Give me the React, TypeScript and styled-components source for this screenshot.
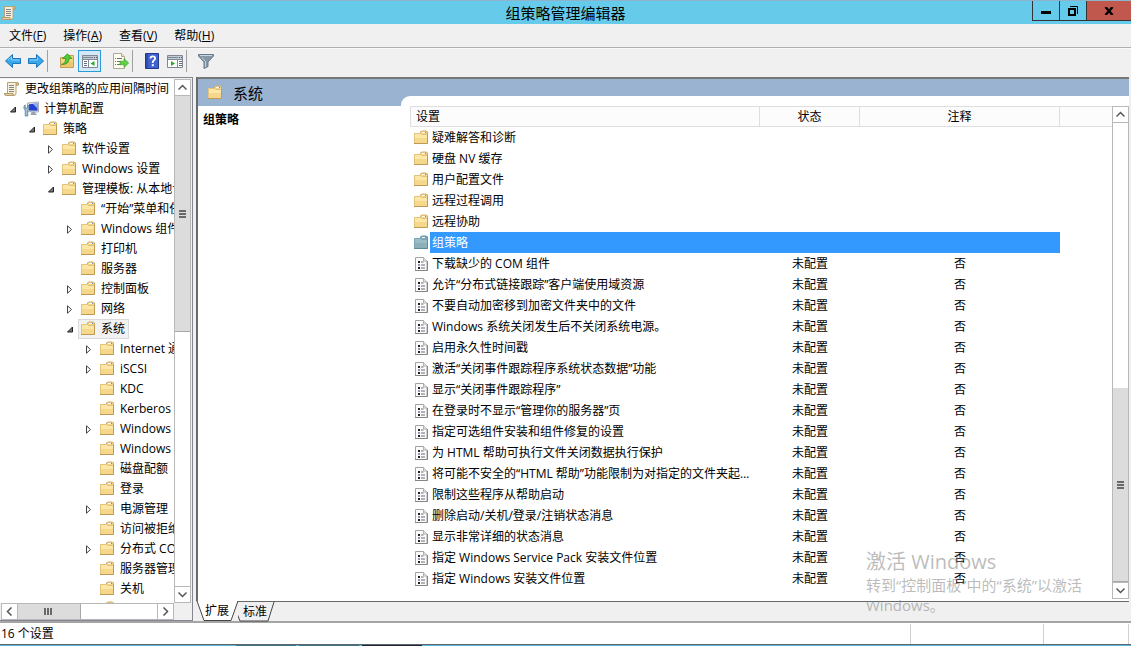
import React from 'react';
import styled, { createGlobalStyle, css } from 'styled-components';

const Global = createGlobalStyle`
  * { box-sizing: border-box; }
  body {
    margin: 0;
    font: 12px/20px "Open Sans", "Noto Sans CJK SC", sans-serif;
    color: #000;
    background: #f0f0f0;
  }
  button { font: inherit; color: inherit; padding: 0; border: 0; background: none; }
  svg { display: block; flex: none; }
`;

const Window = styled.div`
  display: flex;
  flex-direction: column;
  height: 100vh;
  overflow: hidden;
`;

const TitleBar = styled.header`
  display: flex;
  align-items: center;
  flex: none;
  height: 24px;
  padding-left: 1px;
  background: #66caea;
  border-top: 1px solid #8fb3cc;
`;

const Title = styled.h1`
  flex: 1;
  margin: 0;
  padding-left: 82px;
  font-size: 15px;
  font-weight: 400;
  line-height: 22px;
  text-align: center;
`;

const Caption = styled.div`
  display: flex;
  align-self: flex-start;
  height: 20px;
`;

const CaptionButton = styled.button<{ $close?: boolean }>`
  display: flex;
  align-items: center;
  justify-content: center;
  width: ${p => (p.$close ? 45 : 27)}px;
  border: solid #333;
  border-width: 0 0 1px 1px;
  background: ${p => (p.$close ? '#c1584d' : 'transparent')};
`;

const MenuBar = styled.nav`
  display: flex;
  flex: none;
  gap: 17px;
  height: 24px;
  padding: 1px 9px 0;
  border-bottom: 1px solid #b0b0b0;
`;

const ToolBar = styled.div`
  display: flex;
  align-items: center;
  flex: none;
  height: 29px;
  padding: 0 1px 5px;
  border-top: 1px solid #fafafa;
`;

const Tool = styled.button<{ $active?: boolean }>`
  display: flex;
  align-items: center;
  justify-content: center;
  width: 23px;
  height: 22px;
  ${p => p.$active && css`
    background: #d3e9f7;
    border: 1px solid #2a9ad8;
  `}
`;

const Separator = styled.span<{ $blank?: boolean }>`
  width: 1px;
  height: 22px;
  margin-right: 7px;
  background: ${p => (p.$blank ? 'transparent' : '#a0a0a0')};
`;

const Main = styled.main`
  display: flex;
  flex: 1;
  min-height: 0;
  gap: 3px;
`;

const TreePane = styled.aside`
  display: flex;
  flex-direction: column;
  flex: none;
  width: 193px;
  padding: 1px 1px 0 0;
  border: solid #828790;
  border-width: 1px 1px 1px 0;
`;

const TreeBody = styled.div`
  display: flex;
  flex: 1;
  min-height: 0;
`;

const Tree = styled.ul`
  flex: 1;
  min-width: 0;
  margin: 0;
  padding: 0;
  overflow: hidden;
  list-style: none;
  background: #fff;
`;

const TreeRow = styled.li<{ $level: number }>`
  display: flex;
  align-items: center;
  height: 20px;
  padding-left: ${p => (p.$level ? p.$level * 19 - 15 : 2)}px;
  white-space: nowrap;
`;

const Twist = styled.span`
  flex: none;
  width: 17px;
  padding-left: 5px;
`;

const Node = styled.span<{ $selected?: boolean }>`
  display: flex;
  align-items: center;
  gap: 5px;
  height: 20px;
  padding: 0 3px 0 1px;
  border: 1px solid ${p => (p.$selected ? '#dadada' : 'transparent')};
  background: ${p => (p.$selected ? '#f2f2f2' : 'transparent')};
`;

const VBar = styled.div`
  display: flex;
  flex-direction: column;
  flex: none;
  width: 17px;
  background: #fff;
  border: solid #b8b8b8;
  border-width: 0 1px;
`;

const HBar = styled.div`
  display: flex;
  flex: none;
  height: 17px;
  margin: 0 17px 0 1px;
  background: #fff;
  border: solid #b8b8b8;
  border-width: 1px 0;
`;

const Arrow = styled.button<{ $side?: boolean }>`
  display: flex;
  align-items: center;
  justify-content: center;
  flex: none;
  width: ${p => (p.$side ? 17 : 15)}px;
  height: ${p => (p.$side ? 15 : 17)}px;
  border: solid #b8b8b8;
  border-width: ${p => (p.$side ? '0 1px' : '1px 0')};
`;

const Track = styled.div<{ $grow: number }>`
  flex: ${p => p.$grow} 1 0;
`;

const Thumb = styled.div<{ $grow: number; $side?: boolean }>`
  display: flex;
  align-items: center;
  justify-content: center;
  flex: ${p => p.$grow} 1 0;
  background: #dcdcdc;
  border: solid #a8a8a8;
  border-width: ${p => (p.$side ? '0 1px 0 0' : '0 0 1px')};
`;

const RightPane = styled.section`
  display: flex;
  flex-direction: column;
  flex: 1;
  min-width: 0;
  margin-right: 2px;
`;

const Framed = styled.div`
  display: flex;
  flex: 1;
  min-height: 0;
  border: solid #696969;
  border-width: 2px 0 0 2px;
  border-top-color: #777;
  background: #9ab3d0;
`;

const Summary = styled.div`
  display: flex;
  flex-direction: column;
  flex: none;
  width: 203px;
`;

const SummaryHead = styled.div`
  display: flex;
  align-items: center;
  gap: 10px;
  height: 27px;
  padding-left: 9px;
  font-size: 15px;
`;

const SummaryText = styled.h2`
  flex: 1;
  margin: 0;
  padding: 4px 5px;
  background: #fff;
  font-size: 12px;
  line-height: 20px;
`;

const ListSide = styled.div`
  flex: 1;
  min-width: 0;
  padding-top: 17px;
  background: linear-gradient(#9ab3d0 27px, #fff 27px);
`;

const ListCard = styled.div`
  display: flex;
  height: 100%;
  padding: 10px 0 2px 9px;
  border-radius: 9px 0 0 0;
  background: #fff;
`;

const TableWrap = styled.div`
  flex: 1;
  min-width: 0;
  overflow: hidden;
`;

const Table = styled.table`
  width: 100%;
  border-collapse: separate;
  border-spacing: 0;
  table-layout: fixed;

  th {
    height: 21px;
    padding: 0 5px;
    border: solid #dedede;
    border-width: 1px 1px 1px 0;
    background: #fcfcfc;
    font-weight: 400;
    line-height: 19px;
  }
  th:first-child { text-align: left; border-left-width: 1px; }
  th:last-child { border-right: 0; }
`;

const Row = styled.tr<{ $selected?: boolean }>`
  td {
    height: 21px;
    padding: 0;
    line-height: 21px;
    text-align: center;
    ${p => p.$selected && css`background: #3399ff;`}
  }
  td:first-child { background: #fff; }
  td:last-child { background: #fff; }
`;

const NameCell = styled.div`
  display: flex;
  align-items: center;
  height: 21px;
  padding-left: 3px;
  gap: 1px;
`;

const Name = styled.span<{ $selected?: boolean }>`
  flex: 1;
  min-width: 0;
  padding: 0 6px 0 2px;
  overflow: hidden;
  text-align: left;
  text-overflow: ellipsis;
  white-space: nowrap;
  ${p => p.$selected && css`
    background: #3399ff;
    color: #fff;
  `}
`;

const TabStrip = styled.div`
  display: flex;
  flex: none;
  height: 20px;
  border-top: 1px solid #696969;
`;

const Tab = styled.button<{ $active?: boolean }>`
  position: relative;
  z-index: ${p => (p.$active ? 1 : 0)};
  height: 19px;
  width: ${p => (p.$active ? 42 : 34)}px;
  margin-top: ${p => (p.$active ? -1 : 0)}px;
  line-height: 20px;
`;

const TabShape = styled.svg`
  position: absolute;
  left: 0;
  top: 0;
`;

const TabLabel = styled.span`
  position: relative;
  white-space: nowrap;
`;

const StatusBar = styled.footer`
  display: flex;
  flex: none;
  height: 23px;
  padding: 0 2px 0 1px;
  background: #fff;
  border-top: 2px solid #a5a5a5;
`;

const StatusCell = styled.span<{ $width?: number }>`
  ${p => (p.$width ? css`width: ${p.$width}px;` : css`flex: 1;`)}
  margin-top: 1px;
  line-height: 19px;
  border-right: 1px solid #d0d0d0;
`;

const Edge = styled.div`
  display: flex;
  flex: none;
  gap: 3px;
  height: 2px;
  padding-left: 236px;
  border-top: 1px solid #5a6870;
  background: #5bb8d6;
`;

const EdgeBlock = styled.span<{ $dark?: boolean }>`
  width: 60px;
  background: ${p => (p.$dark ? '#22222c' : '#3f7486')};
`;

const Watermark = styled.div`
  position: absolute;
  right: 45px;
  bottom: 31px;
  width: 220px;
  color: rgba(120, 120, 120, 0.5);
  font-size: 15px;
  line-height: 20px;
  pointer-events: none;

  strong {
    display: block;
    font-size: 20px;
    font-weight: 400;
    line-height: 27px;
  }
`;

const Folder = ({ dim }: { dim?: boolean }) => (
  <svg width="16" height="16" viewBox="0 0 16 16">
    <path d="M7.500 3V2l1-1h5l1 1v3h-7z" fill={dim ? '#7fa9b6' : '#f0d48a'} stroke={dim ? '#6697a9' : '#d2ac62'} />
    <path d="M9 2.500h3" stroke="#fff" />
    <path d="M12 2.500h1" stroke="#3f93dd" />
    <path d="M1 3h6.500l1 1H15v10H1z" fill={dim ? '#9abdc6' : '#fde7a6'} />
    <path d="M1 8h14v6H1z" fill={dim ? '#8bb0ba' : '#f6d88c'} />
    <path d="M1.500 13.500V3.500H7.500l1 1h6" fill="none" stroke={dim ? '#7fa6b4' : '#e3c27c'} />
    <path d="M1 13.500h13.500V4" fill="none" stroke={dim ? '#5f8c9b' : '#c09a55'} />
  </svg>
);

const Scroll = () => (
  <svg width="16" height="16" viewBox="0 0 16 16">
    <path d="M3.500 1.500h9q2 0 2 1.500v1H12v8.500q0 2-2 2H2.500q-2 0-2-2h3z" fill="#f8f0d8" stroke="#b9a27a" />
    <path d="M12 4V3q0-1.500 1.200-1.500T14.500 3v1z" fill="#dcc596" stroke="#b49b6c" />
    <path d="M5 4.500h5M5 6.500h5M5 8.500h5M5 10.500h5" stroke="#85858e" />
    <path d="M.5 12.500h8.500q0 2 1 2h-7.500q-2 0-2-2z" fill="#e6d3a8" stroke="#b49b6c" />
  </svg>
);

const Computer = () => (
  <svg width="16" height="16" viewBox="0 0 16 16">
    <path d="M4.500 2l11-1v10l-11-.5z" fill="#dfe4ea" stroke="#a6afb9" />
    <path d="M6 3.200l8.500-.7v7.300L6 9.400z" fill="#2340cf" />
    <path d="M10 2.900l4.500-.4v5z" fill="#93aef5" />
    <path d="M8.500 11h4v1.500l2 1.500h-7z" fill="#9aa3ae" />
    <path d="M1 5v3l1.200 1v6h2.600V9L6 8V5L4.800 4v3H2.200V4z" fill="#a3c2d6" stroke="#587f99" strokeWidth=".8" />
  </svg>
);

const Policy = () => (
  <svg width="16" height="16" viewBox="0 0 16 16">
    <path d="M2.500 1.500h8l3.500 3.500v9.500H2.500z" fill="#fcfcfc" stroke="#a2a2a2" />
    <path d="M10.500 1.500V5H14" fill="#e4e4e4" stroke="#b0b0b0" />
    <path d="M2 14.500h12.500V5" fill="none" stroke="#858585" />
    <path d="M5 5h2v2H5zM5 11h2v2H5z" fill="#1c1c1c" />
    <path d="M5 8h2v2H5z" fill="#9090b8" />
    <path d="M8 6h2.500M8 9h4M8 12h4" stroke="#66667c" />
  </svg>
);

const Blue = ({ flip }: { flip?: boolean }) => (
  <svg width="16" height="16" viewBox="0 0 16 16">
    <path d={flip ? 'M15.500 8 8.500 1.500v4h-8v5h8v4z' : 'M.5 8l7-6.500v4h8v5h-8v4z'} fill="#35a7ea" stroke="#1c75bd" />
    <path d={flip ? 'M1.500 7h8V4.500' : 'M3 7l3.500-3v3h8'} fill="none" stroke="#8ed5fa" />
  </svg>
);

const UpFolder = () => (
  <svg width="16" height="16" viewBox="0 0 16 16">
    <path d="M1.500 4.500h6l1.500-2h5.500v12h-13z" fill="#f4d684" stroke="#c39f56" />
    <path d="M2 9h12v5H2z" fill="#eec76e" />
    <path d="M2.500 11.500q4.500-1 4-6H3.500L8.500.8 13 5.500h-3q.5 6-7.500 6z" fill="#4fcb35" stroke="#2b8b1b" strokeWidth=".7" />
  </svg>
);

const Panes = ({ right }: { right?: boolean }) => (
  <svg width="16" height="16" viewBox="0 0 16 16">
    <path d="M.5 2.500h15v12H.5z" fill="#fff" stroke="#7e8995" />
    <path d="M1 3h14v3.500H1z" fill="#c3ccd4" />
    <path d="M1 4.500h10M1 6.500h14" stroke="#7e8995" />
    <path d="M12 4.500h1M14 4.500h1" stroke="#4f5a66" />
    <path d={right ? 'M10.500 7v7' : 'M6.500 7v7'} stroke="#7e8995" />
    <path d={right ? 'M12 8.500h3M12 10.500h3M12 12.500h3' : 'M2 8.500h3M2 10.500h3M2 12.500h3'} stroke="#66717e" />
    <path d={right ? 'M4 8v5l4-2.500z' : 'M12.500 8v5l-4-2.500z'} fill="#27ac25" />
  </svg>
);

const Export = () => (
  <svg width="16" height="16" viewBox="0 0 16 16">
    <path d="M.5.5h8l3 3v12H.5z" fill="#fffdf0" stroke="#b0a88e" />
    <path d="M8.500.5v3h3" fill="#eee5c8" stroke="#b0a88e" />
    <path d="M2 5.500h1M2 8.500h1M2 11.500h1M4 5.500h5M4 8.500h4M4 11.500h4" stroke="#687080" />
    <path d="M7 8.200h4V5.500l4.700 4.500-4.700 4.500v-2.700H7z" fill="#63cf45" stroke="#379a29" strokeWidth=".6" />
  </svg>
);

const HelpBook = () => (
  <svg width="14" height="16" viewBox="0 0 14 16">
    <path d="M.5.5h13v15H.5z" fill="#3f63cd" stroke="#22398c" />
    <path d="M2 1v14" stroke="#20398d" />
    <path d="M5.500 5.500q0-2.200 2.300-2.200t2.300 2.200q0 1.200-1.400 2-1 .6-1 2.500" fill="none" stroke="#fff" strokeWidth="1.800" />
    <path d="M6.800 11.200h2v2h-2z" fill="#fff" />
  </svg>
);

const Filter = () => (
  <svg width="16" height="16" viewBox="0 0 16 16">
    <path d="M.5 1.500h15v1.500L10 9v4.500l-4 2V9L.5 3z" fill="#8496a7" stroke="#66788a" />
    <path d="M2 2.500h12" stroke="#cbd7e0" />
    <path d="M4 4.500l3.500 4V14" fill="none" stroke="#c6d2dc" />
  </svg>
);

const Chevron = ({ d }: { d: string }) => (
  <svg width="9" height="9" viewBox="0 0 9 9"><path d={d} fill="none" stroke="#555" strokeWidth="1.500" /></svg>
);
const UP = 'M.5 6.500l4-4 4 4';
const DOWN = 'M.5 2.500l4 4 4-4';
const LEFT = 'M6.500.5l-4 4 4 4';
const RIGHT = 'M2.500.5l4 4-4 4';

const Grip = ({ side }: { side?: boolean }) => (
  <svg width="9" height="9" viewBox="0 0 9 9">
    <path d={side ? 'M1 1v7M4 1v7M7 1v7' : 'M1 2h7M1 5h7M1 8h7'} stroke="#555" strokeWidth="2" strokeOpacity=".85" />
  </svg>
);

const Twisty = ({ open }: { open: boolean }) => (
  <svg width="8" height="9" viewBox="0 0 8 9">
    {open
      ? <path d="M6.500 2v5h-5z" fill="#777" stroke="#222" />
      : <path d="M1.500.8v7.400l4-3.700z" fill="#fff" stroke="#444" />}
  </svg>
);

type TreeItem = [level: number, label: string, state?: 'open' | 'closed'];
const tree: TreeItem[] = [
  [0, '更改组策略的应用间隔时间'],
  [1, '计算机配置', 'open'],
  [2, '策略', 'open'],
  [3, '软件设置', 'closed'],
  [3, 'Windows 设置', 'closed'],
  [3, '管理模板: 从本地计算机', 'open'],
  [4, '“开始”菜单和任务栏'],
  [4, 'Windows 组件', 'closed'],
  [4, '打印机'],
  [4, '服务器'],
  [4, '控制面板', 'closed'],
  [4, '网络', 'closed'],
  [4, '系统', 'open'],
  [5, 'Internet 通信管理', 'closed'],
  [5, 'iSCSI', 'closed'],
  [5, 'KDC'],
  [5, 'Kerberos'],
  [5, 'Windows', 'closed'],
  [5, 'Windows'],
  [5, '磁盘配额'],
  [5, '登录'],
  [5, '电源管理', 'closed'],
  [5, '访问被拒绝'],
  [5, '分布式 COM', 'closed'],
  [5, '服务器管理器'],
  [5, '关机'],
  [5, ''],
];

const folders = ['疑难解答和诊断', '硬盘 NV 缓存', '用户配置文件', '远程过程调用', '远程协助', '组策略'];
const policies = [
  '下载缺少的 COM 组件',
  '允许“分布式链接跟踪”客户端使用域资源',
  '不要自动加密移到加密文件夹中的文件',
  'Windows 系统关闭发生后不关闭系统电源。',
  '启用永久性时间戳',
  '激活“关闭事件跟踪程序系统状态数据”功能',
  '显示“关闭事件跟踪程序”',
  '在登录时不显示“管理你的服务器”页',
  '指定可选组件安装和组件修复的设置',
  '为 HTML 帮助可执行文件关闭数据执行保护',
  '将可能不安全的“HTML 帮助”功能限制为对指定的文件夹起作用',
  '限制这些程序从帮助启动',
  '删除启动/关机/登录/注销状态消息',
  '显示非常详细的状态消息',
  '指定 Windows Service Pack 安装文件位置',
  '指定 Windows 安装文件位置',
];
const menus = [['文件', 'F'], ['操作', 'A'], ['查看', 'V'], ['帮助', 'H']];

export default function App() {
  return (
    <Window>
      <Global />
      <TitleBar>
        <Scroll />
        <Title>组策略管理编辑器</Title>
        <Caption>
          <CaptionButton aria-label="最小化">
            <svg width="10" height="10"><path d="M0 5h10v3H0z" /></svg>
          </CaptionButton>
          <CaptionButton aria-label="还原">
            <svg width="10" height="10" fill="none" stroke="#000">
              <path d="M1 3h6v6H1z" strokeWidth="2" /><path d="M2 .5h7.500V8" />
            </svg>
          </CaptionButton>
          <CaptionButton $close aria-label="关闭">
            <svg width="10" height="8"><path d="M1.500 0l7 8M8.500 0l-7 8" stroke="#000" strokeWidth="2.400" /></svg>
          </CaptionButton>
        </Caption>
      </TitleBar>
      <MenuBar>
        {menus.map(([name, key]) => <button key={key}>{name}(<u>{key}</u>)</button>)}
      </MenuBar>
      <ToolBar>
        <Tool aria-label="后退"><Blue /></Tool>
        <Tool aria-label="前进"><Blue flip /></Tool>
        <Separator />
        <Tool aria-label="上移"><UpFolder /></Tool>
        <Tool $active aria-label="显示控制台树"><Panes /></Tool>
        <Separator $blank />
        <Tool aria-label="导出列表"><Export /></Tool>
        <Separator />
        <Tool aria-label="帮助"><HelpBook /></Tool>
        <Tool aria-label="显示操作窗格"><Panes right /></Tool>
        <Separator />
        <Tool aria-label="筛选器"><Filter /></Tool>
      </ToolBar>
      <Main>
        <TreePane>
          <TreeBody>
            <Tree>
              {tree.map(([level, label, state], i) => (
                <TreeRow key={i} $level={level}>
                  {level > 0 && <Twist>{state && <Twisty open={state === 'open'} />}</Twist>}
                  <Node $selected={label === '系统'}>
                    {level === 0 ? <Scroll /> : level === 1 ? <Computer /> : <Folder />}
                    {label}
                  </Node>
                </TreeRow>
              ))}
            </Tree>
            <VBar>
              <Arrow aria-label="向上"><Chevron d={UP} /></Arrow>
              <Thumb $grow={235}><Grip /></Thumb>
              <Track $grow={255} />
              <Arrow aria-label="向下"><Chevron d={DOWN} /></Arrow>
            </VBar>
          </TreeBody>
          <HBar>
            <Arrow $side aria-label="向左"><Chevron d={LEFT} /></Arrow>
            <Thumb $side $grow={62}><Grip side /></Thumb>
            <Track $grow={77} />
            <Arrow $side aria-label="向右"><Chevron d={RIGHT} /></Arrow>
          </HBar>
        </TreePane>
        <RightPane>
          <Framed>
            <Summary>
              <SummaryHead><Folder />系统</SummaryHead>
              <SummaryText>组策略</SummaryText>
            </Summary>
            <ListSide>
              <ListCard>
                <TableWrap>
                  <Table>
                    <colgroup>
                      <col style={{ width: 350 }} />
                      <col style={{ width: 100 }} />
                      <col style={{ width: 200 }} />
                      <col />
                    </colgroup>
                    <thead>
                      <tr><th>设置</th><th>状态</th><th>注释</th><th /></tr>
                    </thead>
                    <tbody>
                      {folders.map(name => (
                        <Row key={name} $selected={name === '组策略'}>
                          <td><NameCell><Folder dim={name === '组策略'} /><Name $selected={name === '组策略'}>{name}</Name></NameCell></td>
                          <td /><td /><td />
                        </Row>
                      ))}
                      {policies.map(name => (
                        <Row key={name}>
                          <td><NameCell><Policy /><Name>{name}</Name></NameCell></td>
                          <td>未配置</td><td>否</td><td />
                        </Row>
                      ))}
                    </tbody>
                  </Table>
                </TableWrap>
                <VBar>
                  <Arrow aria-label="向上"><Chevron d={UP} /></Arrow>
                  <Track $grow={265} />
                  <Thumb $grow={193}><Grip /></Thumb>
                  <Arrow aria-label="向下"><Chevron d={DOWN} /></Arrow>
                </VBar>
              </ListCard>
            </ListSide>
          </Framed>
          <TabStrip>
            <Tab $active>
              <TabShape width="43" height="20">
                <path d="M0 0l8 19h27l7-19z" fill="#fff" />
                <path d="M1 0l7 19.500h27L42 0" fill="none" stroke="#444" />
              </TabShape>
              <TabLabel>扩展</TabLabel>
            </Tab>
            <Tab>
              <TabShape width="38" height="20"><path d="M-2 9l4 10h28L36 0" fill="none" stroke="#444" /></TabShape>
              <TabLabel>标准</TabLabel>
            </Tab>
          </TabStrip>
        </RightPane>
      </Main>
      <StatusBar>
        <StatusCell>16 个设置</StatusCell>
        <StatusCell $width={133} />
        <StatusCell $width={85} />
      </StatusBar>
      <Edge><EdgeBlock /><EdgeBlock /><EdgeBlock $dark /></Edge>
      <Watermark><strong>激活 Windows</strong>转到“控制面板”中的“系统”以激活 Windows。</Watermark>
    </Window>
  );
}
